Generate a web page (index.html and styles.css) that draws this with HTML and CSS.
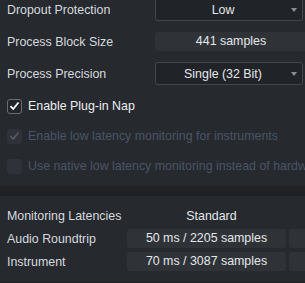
FILE: index.html
```html
<!DOCTYPE html>
<html lang="en">
<head>
	<meta charset="UTF-8">
	<title>Processing</title>
	<link rel="stylesheet" href="styles.css">
</head>
<body>
	<div class="settings">
		<div class="setting-row first">
			<span class="label">Dropout Protection</span>
			<div class="select">
				<span class="select-text">Low</span>
				<span class="arrow"></span>
			</div>
		</div>
		<div class="setting-row">
			<span class="label">Process Block Size</span>
			<div class="field">441 samples</div>
		</div>
		<div class="setting-row">
			<span class="label">Process Precision</span>
			<div class="select">
				<span class="select-text">Single (32 Bit)</span>
				<span class="arrow"></span>
			</div>
		</div>
	</div>

	<div class="options">
		<div class="check-row">
			<span class="checkbox on">
				<svg width="11" height="10" viewBox="0 0 11 10"><polyline points="1.5,5.2 4.2,8 9.5,1.5" fill="none" stroke="#ffffff" stroke-width="1.8"/></svg>
			</span>
			<span class="check-label">Enable Plug-in Nap</span>
		</div>
		<div class="check-row disabled">
			<span class="checkbox">
				<svg width="11" height="10" viewBox="0 0 11 10"><polyline points="1.5,5.2 4.2,8 9.5,1.5" fill="none" stroke="#535a62" stroke-width="1.8"/></svg>
			</span>
			<span class="check-label">Enable low latency monitoring for instruments</span>
		</div>
		<div class="check-row disabled">
			<span class="checkbox"></span>
			<span class="check-label">Use native low latency monitoring instead of hardware</span>
		</div>
	</div>

	<div class="divider"></div>

	<div class="latencies">
		<div class="lat-row">
			<span class="label">Monitoring Latencies</span>
			<span class="lat-head">Standard</span>
			<span class="lat-head"></span>
		</div>
		<div class="lat-row">
			<span class="label">Audio Roundtrip</span>
			<span class="lat-box">50 ms / 2205 samples</span>
			<span class="lat-box"></span>
		</div>
		<div class="lat-row">
			<span class="label">Instrument</span>
			<span class="lat-box">70 ms / 3087 samples</span>
			<span class="lat-box"></span>
		</div>
	</div>
</body>
</html>
```

FILE: styles.css
```css
* {
	padding: 0;
	margin: 0;
	box-sizing: border-box;
}
html, body {
	width: 100%;
	height: 100%;
	overflow: hidden;
}
body {
	background: #26292e;
	color: #d6dadf;
	font-family: "Liberation Sans", Arial, sans-serif;
	font-size: 12.4px;
}
.settings {
	display: flex;
	flex-direction: column;
	gap: 9px;
	padding-left: 7px;
}
.setting-row {
	display: grid;
	grid-template-columns: 148px 152px;
	align-items: center;
	height: 23px;
}
.setting-row.first {
	margin-top: -2px;
}
.select {
	position: relative;
	display: flex;
	align-items: center;
	height: 23px;
	width: 148px;
	padding-right: 12px;
	background: #202327;
	border: 1px solid #43474c;
	border-radius: 3px;
}
.select-text {
	flex: 1;
	text-align: center;
	color: #e4e7ea;
}
.arrow {
	position: absolute;
	right: 5px;
	top: 9px;
	width: 0;
	height: 0;
	border-left: 3.5px solid transparent;
	border-right: 3.5px solid transparent;
	border-top: 4px solid #8b8f94;
}
.field {
	height: 19px;
	line-height: 19px;
	text-align: center;
	background: #2f3338;
	border-radius: 3px;
	color: #e4e7ea;
}
.options {
	margin-top: 6px;
	padding-left: 7px;
}
.check-row {
	display: flex;
	align-items: center;
	gap: 6px;
	height: 30px;
	white-space: nowrap;
}
.checkbox {
	display: flex;
	align-items: center;
	justify-content: center;
	width: 15px;
	height: 15px;
	flex: none;
	border-radius: 3px;
	background: #2f3339;
}
.checkbox.on {
	background: #222529;
	border: 1px solid #6a6e73;
}
.check-label {
	color: #eceef0;
}
.disabled .check-label {
	color: #4a5567;
}
.divider {
	height: 10px;
	margin-top: 5px;
	background: #1f2125;
}
.latencies {
	display: flex;
	flex-direction: column;
	gap: 4px;
	padding: 10px 0 11px 7px;
	border-bottom: 1px solid #1f2125;
}
.lat-row {
	display: grid;
	grid-template-columns: 117px 159px 40px;
	column-gap: 3px;
	align-items: center;
	height: 19px;
	white-space: nowrap;
}
.lat-head {
	padding-left: 10px;
	text-align: center;
	color: #e4e7ea;
}
.lat-box {
	height: 19px;
	line-height: 19px;
	text-align: center;
	background: #2f3338;
	border-radius: 3px;
	color: #e4e7ea;
}
```
